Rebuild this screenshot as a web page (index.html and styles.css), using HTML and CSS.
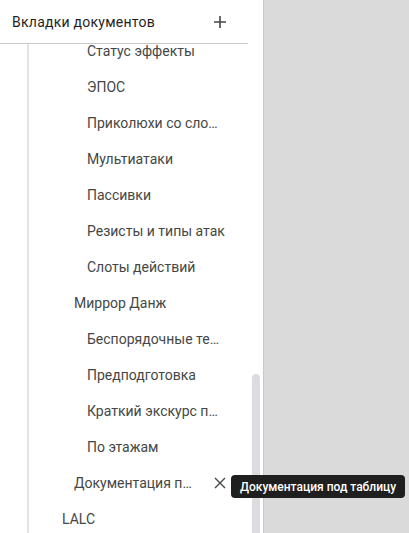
FILE: index.html
```html
<!DOCTYPE html>
<html lang="ru">
<head>
<meta charset="utf-8">
<link rel="stylesheet" href="styles.css">
</head>
<body>
<div class="page">
  <aside class="panel">
    <div class="header">
      <span class="title">Вкладки документов</span>
      <svg class="plus" width="12" height="12" viewBox="0 0 12 12"><path d="M6 0v12M0 6h12" stroke="#444746" stroke-width="1.6" fill="none"/></svg>
    </div>
    <div class="scroll">
      <ul class="list">
        <li class="row d3"><span class="label">Статус эффекты</span></li>
        <li class="row d3"><span class="label">ЭПОС</span></li>
        <li class="row d3"><span class="label">Приколюхи со словами</span></li>
        <li class="row d3"><span class="label">Мультиатаки</span></li>
        <li class="row d3"><span class="label">Пассивки</span></li>
        <li class="row d3"><span class="label">Резисты и типы атак</span></li>
        <li class="row d3"><span class="label">Слоты действий</span></li>
        <li class="row d2"><span class="label">Миррор Данж</span></li>
        <li class="row d3"><span class="label">Беспорядочные тексты</span></li>
        <li class="row d3"><span class="label">Предподготовка</span></li>
        <li class="row d3"><span class="label">Краткий экскурс по данжу</span></li>
        <li class="row d3"><span class="label">По этажам</span></li>
        <li class="row d2 hover"><span class="label">Документация под таблицу</span>
          <svg class="close" width="12" height="12" viewBox="0 0 12 12"><path d="M1 1l10 10M11 1L1 11" stroke="#444746" stroke-width="1.4" fill="none"/></svg>
        </li>
        <li class="row d1"><span class="label">LALC</span></li>
        <li class="row d1"><span class="label">Прочее</span></li>
      </ul>
      <div class="thumb"></div>
    </div>
  </aside>
  <main class="canvas"></main>
  <div class="tooltip">Документация под таблицу</div>
</div>
</body>
</html>
```
FILE: styles.css
```css
html, body {
  margin: 0;
  padding: 0;
  height: 100%;
  overflow: hidden;
}
body {
  font-family: Roboto, "Noto Sans", "Liberation Sans", sans-serif;
  color: #444746;
}
.page {
  position: relative;
  display: flex;
  height: 533px;
}
.panel {
  width: 263px;
  background: #fff;
  display: flex;
  flex-direction: column;
}
.header {
  width: 248px;
  height: 44px;
  box-sizing: border-box;
  border-bottom: 1px solid #c7c7c7;
  display: flex;
  align-items: center;
  justify-content: space-between;
  padding: 0 22px 0 12px;
  flex: none;
}
.title {
  font-size: 14px;
  color: #1f1f1f;
  font-weight: 400;
  letter-spacing: 0.25px;
}
.plus {
  display: block;
  margin-top: 1px;
}
.scroll {
  position: relative;
  flex: 1;
  overflow: hidden;
  margin-left: 27px;
  border-left: 2px solid #e3e3e3;
}
.list {
  list-style: none;
  margin: -11px 0 0 0;
  padding: 0;
  width: 219px;
}
.row {
  height: 36px;
  display: flex;
  align-items: center;
  font-size: 14px;
  box-sizing: border-box;
  padding-right: 23px;
}
.label {
  white-space: nowrap;
  overflow: hidden;
  text-overflow: ellipsis;
  min-width: 0;
}
.d3 { padding-left: 58px; }
.d2 { padding-left: 45px; }
.d1 { padding-left: 33px; }
.hover { padding-right: 22px; }
.hover .label { flex: 1; padding-right: 20px; }
.close { flex: none; display: block; }
.thumb {
  position: absolute;
  left: 223px;
  top: 330px;
  width: 8px;
  height: 300px;
  border-radius: 4px;
  background: #dadce0;
}
.canvas {
  flex: 1;
  background: #dadada;
  border-left: 1px solid #c8c8c8;
}
.tooltip {
  position: absolute;
  left: 231px;
  top: 475px;
  height: 23px;
  padding: 0 9px 0 9px;
  display: flex;
  align-items: center;
  background: #1f1f1f;
  color: #fff;
  font-size: 12px;
  font-weight: 500;
  border-radius: 4px;
  white-space: nowrap;
}
```
